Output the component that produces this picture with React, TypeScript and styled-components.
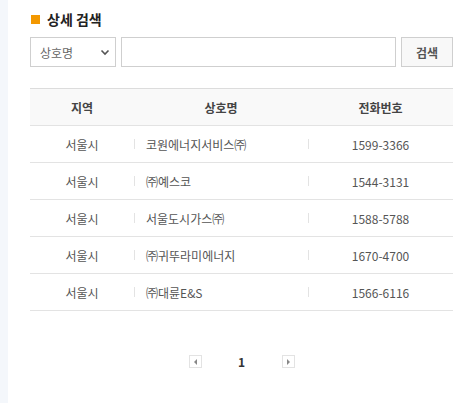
import React from "react";
import styled, { createGlobalStyle } from "styled-components";

const GlobalStyle = createGlobalStyle`
  body {
    margin: 0;
    background: #fff;
    font-family: "Noto Sans CJK KR", "Noto Sans", sans-serif;
  }
`;

const Page = styled.div`
  display: flex;
  min-height: 403px;
`;

const SideStrip = styled.div`
  width: 8px;
  background: #f4f7fb;
  flex-shrink: 0;
`;

const Main = styled.div`
  flex: 1;
  padding: 8px 12px 0 22px;
`;

const Title = styled.h2`
  display: flex;
  align-items: center;
  gap: 7px;
  margin: 0 0 7px 1px;
  height: 22px;
  font-size: 14px;
  font-weight: 700;
  color: #222;
  &::before {
    content: "";
    width: 9px;
    height: 9px;
    background: #f39800;
  }
`;

const SearchRow = styled.div`
  display: flex;
  gap: 5px;
  height: 30px;
`;

const SelectBox = styled.div`
  width: 86px;
  box-sizing: border-box;
  border: 1px solid #cfcfcf;
  display: flex;
  align-items: center;
  justify-content: space-between;
  padding: 0 4px 0 9px;
  font-size: 12px;
  color: #666;
`;

const TextInput = styled.input`
  flex: 1;
  box-sizing: border-box;
  border: 1px solid #cfcfcf;
  outline: none;
  padding: 0 8px;
`;

const SearchButton = styled.button`
  width: 52px;
  box-sizing: border-box;
  border: 1px solid #cfcfcf;
  background: #f8f8f8;
  font-family: inherit;
  font-size: 12px;
  font-weight: 700;
  color: #555;
  padding: 0;
`;

const Table = styled.div`
  margin-top: 21px;
  border-top: 1px solid #dcdcdc;
`;

const Row = styled.div<{ $head?: boolean }>`
  display: grid;
  grid-template-columns: 104px 174px 1fr;
  height: 36px;
  border-bottom: 1px solid #e3e3e3;
  background: ${(p) => (p.$head ? "#f9f9f9" : "#fff")};
  font-size: 12px;
  font-weight: ${(p) => (p.$head ? 700 : 400)};
  color: ${(p) => (p.$head ? "#444" : "#555")};
`;

const Cell = styled.div<{ $left?: boolean; $sep?: boolean }>`
  position: relative;
  display: flex;
  align-items: center;
  justify-content: ${(p) => (p.$left ? "flex-start" : "center")};
  padding-left: ${(p) => (p.$left ? "12px" : "0")};
  &::before {
    content: "";
    display: ${(p) => (p.$sep ? "block" : "none")};
    position: absolute;
    left: 0;
    top: 13px;
    width: 1px;
    height: 10px;
    background: #e3e3e3;
  }
`;

const Pager = styled.div`
  display: flex;
  justify-content: center;
  align-items: center;
  margin-top: 42px;
`;

const PageArrow = styled.span<{ $dir: "prev" | "next" }>`
  width: 13px;
  height: 13px;
  box-sizing: border-box;
  border: 1px solid #e3e3e3;
  display: flex;
  align-items: center;
  justify-content: center;
  &::after {
    content: "";
    border-top: 3px solid transparent;
    border-bottom: 3px solid transparent;
    ${(p) =>
      p.$dir === "prev"
        ? "border-right: 3px solid #888;"
        : "border-left: 3px solid #888;"}
  }
`;

const PageNum = styled.span`
  width: 80px;
  text-align: center;
  font-size: 12px;
  font-weight: 700;
  color: #333;
`;

const rows = [
  ["서울시", "코원에너지서비스㈜", "1599-3366"],
  ["서울시", "㈜예스코", "1544-3131"],
  ["서울시", "서울도시가스㈜", "1588-5788"],
  ["서울시", "㈜귀뚜라미에너지", "1670-4700"],
  ["서울시", "㈜대륜E&S", "1566-6116"],
];

const Chevron = () => (
  <svg width="12" height="12" viewBox="0 0 12 12">
    <path d="M2.5 4.5 L6 8 L9.5 4.5" fill="none" stroke="#555" strokeWidth="1.6" />
  </svg>
);

export default function App() {
  return (
    <Page>
      <GlobalStyle />
      <SideStrip />
      <Main>
        <Title>상세 검색</Title>
        <SearchRow>
          <SelectBox>
            상호명
            <Chevron />
          </SelectBox>
          <TextInput />
          <SearchButton>검색</SearchButton>
        </SearchRow>
        <Table>
          <Row $head>
            <Cell>지역</Cell>
            <Cell>상호명</Cell>
            <Cell>전화번호</Cell>
          </Row>
          {rows.map((r) => (
            <Row key={r[1]}>
              <Cell>{r[0]}</Cell>
              <Cell $left $sep>
                {r[1]}
              </Cell>
              <Cell $sep>{r[2]}</Cell>
            </Row>
          ))}
        </Table>
        <Pager>
          <PageArrow $dir="prev" />
          <PageNum>1</PageNum>
          <PageArrow $dir="next" />
        </Pager>
      </Main>
    </Page>
  );
}
